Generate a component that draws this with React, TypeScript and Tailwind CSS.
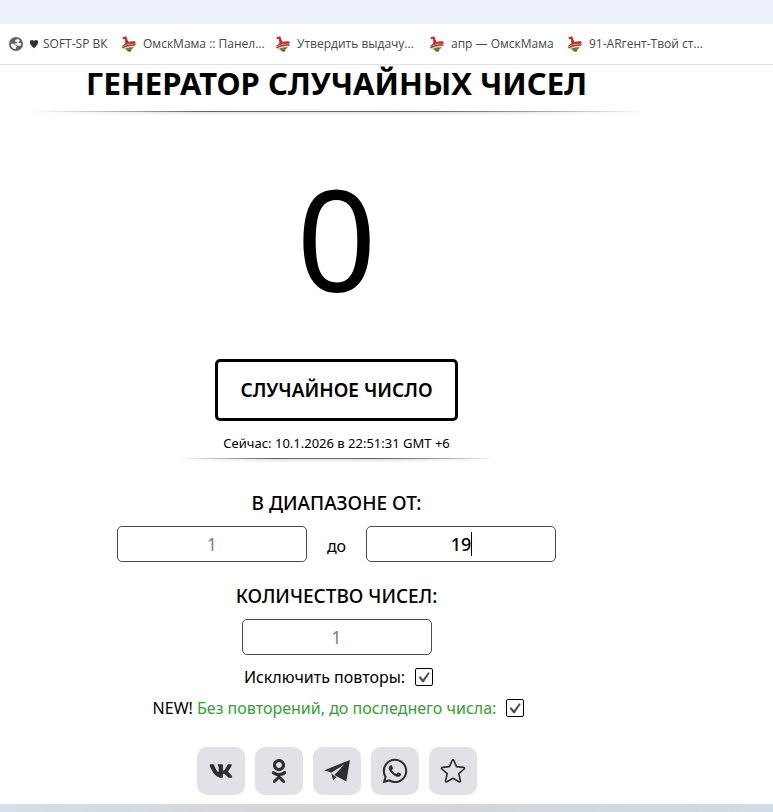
import { useState } from "react";
import type { ReactNode } from "react";
import { FaVk, FaOdnoklassniki, FaWhatsapp } from "react-icons/fa";

const bookmarks = [
  { title: "ОмскМама :: Панел...", width: "w-[154px]" },
  { title: "Утвердить выдачу...", width: "w-[154px]" },
  { title: "апр — ОмскМама", width: "w-[138px]" },
  { title: "91-ARгент-Твой ст...", width: "w-[150px]" },
];

const GlobeIcon = () => (
  <svg viewBox="0 0 14 14" className="w-3.5 h-3.5 shrink-0">
    <circle cx="7" cy="7" r="7" fill="#5f6368" />
    <path
      d="M8.300 1.800C7.800 3 6 2.800 6 4c0 1 1.900.6 2 1.600.1.900-1.200 1.100-2.500 1.100H1.800c0 2.900 2.200 5.300 5 5.500v-1.600c.8-.3 1.300-.8 1-1.600-.4-.9-1.900-.5-3-.9L3.400 7.400h2.700c1.800 0 2.200.5 2.400 1.400h3.300c.3-.9.4-1.700.3-2.600h-1.500c-.8 0-1.200-.5-1-1.100.2-.7 1.100-.6 1.300-1.400-.7-.9-1.500-1.500-2.600-1.900z"
      fill="#fff"
    />
  </svg>
);

const TopIcon = () => (
  <svg viewBox="0 0 16 16" className="w-4 h-4 shrink-0">
    <path d="M1.500 1.300L5.300.3l.9 3-1.700.4-1-.9-1.500.6z" fill="#dc1f22" />
    <path d="M4 3.300l2-.3 1.500 2.700 2.200 1.100-4 1.700-1.300-.8z" fill="#b5302a" />
    <path d="M.5 11.500C1.500 8.500 8 4.800 14.500 5.500c.9 2-.3 4.700-3 6.300l-1.700 3.700-3.300-.9-1-1.300c-2.300.2-4-.3-5-1.800z" fill="#f4ead2" />
    <path d="M2.800 8.600C6 6 10 4.900 14.300 5.400l.3 1.700C10 6.700 5.800 8 2 10z" fill="#d3252a" />
    <path d="M1 11.300c4-2.400 8.500-3.500 13.700-2.900l-.7 1.500c-4-.4-8 .4-12 2.500z" fill="#d3252a" />
    <path d="M1 10.200c4-2.200 8.500-3.200 13.500-2.500" stroke="#3b7a2f" strokeWidth=".9" fill="none" />
    <path d="M3.500 13.100c3-1.600 6-2.200 9.500-1.800l-2 1.800c-2.200-.1-3.500.2-5 1z" fill="#4d8b32" />
    <path d="M5.500 13.600l5-.5-.8 2.600-2.900-.3z" fill="#8d4a22" />
  </svg>
);

const PlaneIcon = () => (
  <svg viewBox="0 0 26 24" className="w-[26px] h-6">
    <path d="M26 1L.3 11.200l6.900 2.500L20.500 5.200 10.400 16l11.900 6.600z" fill="#2b2e34" />
    <path d="M7.200 14.200l2 7.200L12.600 18l-3-1.800z" fill="#2b2e34" />
  </svg>
);

const StarIcon = () => (
  <svg viewBox="0 0 26 26" className="w-[26px] h-[26px]">
    <path
      d="M12.200 2.400Q13 1 13.800 2.400L16.500 8.600L23.600 9.400Q25.300 9.800 24.100 11L18.800 15.700L20.400 22.700Q20.600 24.500 19 23.700L13 20.300L7 23.700Q5.400 24.500 5.600 22.700L7.200 15.700L1.900 11Q.7 9.800 2.400 9.400L9.500 8.600z"
      fill="none"
      stroke="#2b2e34"
      strokeWidth="1.600"
      strokeLinejoin="round"
    />
  </svg>
);

const Divider = () => (
  <div>
    <div className="h-px bg-linear-to-r from-transparent via-[#606060] via-30% to-transparent">
      <div className="h-px bg-linear-to-r from-transparent from-20% via-[#606060] via-60% to-transparent" />
    </div>
    <div className="h-1 bg-linear-to-b from-[#e2e2e2] to-white mask-x-from-70% mask-x-to-100%" />
  </div>
);

const CheckRow = ({ id, children }: { id: string; children: ReactNode }) => {
  const [checked, setChecked] = useState(true);
  return (
    <div className="flex items-center justify-center gap-2.5">
      <label htmlFor={id} className="text-base leading-5">
        {children}
      </label>
      <span className="relative flex">
        <input
          id={id}
          type="checkbox"
          checked={checked}
          onChange={() => setChecked(!checked)}
          className="appearance-none w-[18px] h-[18px] border border-black rounded-xs bg-white"
        />
        {checked && (
          <svg viewBox="0 0 18 18" className="absolute inset-0 w-[18px] h-[18px] pointer-events-none">
            <path d="M3.500 9.300l1.700-1L8 11.200l5.200-7 1.600.7-6.100 9.300H7.300z" fill="#4d4d4d" />
          </svg>
        )}
      </span>
    </div>
  );
};

const socials = [
  { name: "ВКонтакте", icon: <FaVk className="w-6 h-6" /> },
  { name: "Одноклассники", icon: <FaOdnoklassniki className="w-6 h-6" /> },
  { name: "Telegram", icon: <PlaneIcon /> },
  { name: "WhatsApp", icon: <FaWhatsapp className="w-7 h-7" /> },
  { name: "Избранное", icon: <StarIcon /> },
];

const inputClass =
  "w-[190px] h-9 border border-[#4a4a4a] rounded-[5px] bg-white text-center text-lg outline-none caret-transparent placeholder:text-[#808080]";

const App = () => {
  const [max, setMax] = useState("19");
  const [result, setResult] = useState(0);

  const generate = () => setResult(1 + Math.floor(Math.random() * Number(max)));

  return (
    <div className="min-h-screen flex flex-col bg-white text-black font-['Noto_Sans','Open_Sans',sans-serif]">
      <div className="h-6 bg-[#ebf0fa]" />
      <nav className="h-[41px] pl-[9px] flex items-center border-b border-[#dfe1e3] text-xs text-[#45484c] font-['Open_Sans','Noto_Sans',sans-serif] whitespace-nowrap overflow-hidden">
        <a href="#soft" className="w-28 shrink-0 flex items-center gap-1.5">
          <GlobeIcon />
          <span className="flex items-center gap-1">
            <svg viewBox="0 0 10 10" className="w-2.5 h-2.5">
              <path d="M5 9.300C3.500 7.500.8 5.500.8 3.200.8.6 4 .3 5 2.300 6 .3 9.200.6 9.200 3.200 9.200 5.500 6.500 7.500 5 9.300z" fill="#303236" />
            </svg>
            SOFT-SP ВК
          </span>
        </a>
        {bookmarks.map((item) => (
          <a key={item.title} href="#omsk" className={`${item.width} shrink-0 flex items-center gap-1.5`}>
            <TopIcon />
            {item.title}
          </a>
        ))}
      </nav>

      <main className="pr-[100px] flex-1 flex flex-col items-center">
        <h1 className="text-[31px] leading-9 font-bold">ГЕНЕРАТОР СЛУЧАЙНЫХ ЧИСЕЛ</h1>
        <div className="w-full px-7 mt-2.5">
          <Divider />
        </div>

        <output className="mt-[42px] text-[140px] leading-[160px]">{result}</output>

        <button
          type="button"
          onClick={generate}
          className="mt-[41px] w-[243px] h-[62px] border-3 border-black rounded-[5px] text-[19px] font-semibold"
        >
          СЛУЧАЙНОЕ ЧИСЛО
        </button>

        <p className="mt-3 text-[13px] leading-5">Сейчас: 10.1.2026 в 22:51:31 GMT +6</p>
        <div className="w-[316px] mt-[5px]">
          <Divider />
        </div>

        <label htmlFor="min" className="mt-7 text-[19px] leading-6 font-medium">
          В ДИАПАЗОНЕ ОТ:
        </label>
        <div className="mt-[11px] flex items-center gap-5">
          <input id="min" type="text" placeholder="1" className={inputClass} />
          <label htmlFor="max" className="pt-1 text-base leading-5">
            до
          </label>
          <div className="relative">
            <input
              id="max"
              type="text"
              value={max}
              onChange={(e) => setMax(e.target.value)}
              className={`${inputClass} font-medium`}
            />
            <span className="absolute inset-0 flex items-center justify-center text-lg font-medium pointer-events-none">
              <span className="h-6 border-r border-black text-transparent" aria-hidden="true">
                {max}
              </span>
            </span>
          </div>
        </div>

        <label htmlFor="count" className="mt-[22px] text-[19px] leading-6 font-medium">
          КОЛИЧЕСТВО ЧИСЕЛ:
        </label>
        <input id="count" type="text" placeholder="1" className={`${inputClass} mt-[11px]`} />

        <div className="pl-1 mt-3 flex flex-col gap-[11px]">
          <CheckRow id="unique">Исключить повторы:</CheckRow>
          <CheckRow id="last">
            NEW! <span className="text-[#2ba52b]">Без повторений, до последнего числа:</span>
          </CheckRow>
        </div>

        <div className="mt-[29px] mb-[9px] flex gap-2.5">
          {socials.map((item) => (
            <button
              key={item.name}
              type="button"
              aria-label={item.name}
              className="w-12 h-12 rounded-[10px] bg-[#e1e2e7] text-[#2b2e34] flex items-center justify-center"
            >
              {item.icon}
            </button>
          ))}
        </div>
      </main>
      <div className="h-2 bg-linear-to-r from-[#d1e0ea] via-[#d6d4d7] via-40% to-[#cddce6]" />
    </div>
  );
};

export default App;
